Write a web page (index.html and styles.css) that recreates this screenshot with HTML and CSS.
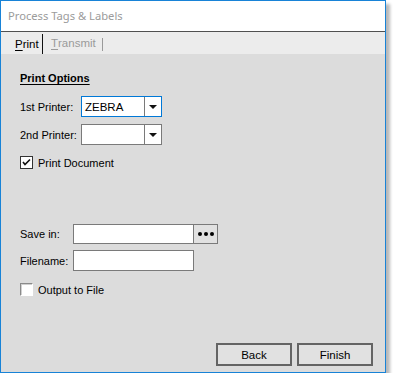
FILE: index.html
```html
<!DOCTYPE html>
<html>
<head>
<meta charset="utf-8">
<link rel="stylesheet" href="styles.css">
</head>
<body>
<div class="window">
  <div class="titlebar">Process Tags &amp; Labels</div>
  <div class="tabs">
    <div class="tab active"><u>P</u>rint</div>
    <div class="tab inactive"><u>T</u>ransmit</div>
  </div>
  <div class="panel">
    <div class="section-title">Print Options</div>
    <div class="row row-combo1">
      <span class="label lw-printer">1st Printer:</span>
      <div class="combo focused">
        <span class="combo-text">ZEBRA</span>
        <span class="combo-btn"><span class="arrow"></span></span>
      </div>
    </div>
    <div class="row row-combo2">
      <span class="label lw-printer">2nd Printer:</span>
      <div class="combo">
        <span class="combo-text"></span>
        <span class="combo-btn"><span class="arrow"></span></span>
      </div>
    </div>
    <div class="row row-check1">
      <span class="checkbox checked">
        <svg width="11" height="11" viewBox="0 0 11 11"><path d="M2 5 L4 7.5 L9 2.5" fill="none" stroke="#111" stroke-width="1.6"/></svg>
      </span>
      <span class="check-label">Print Document</span>
    </div>
    <div class="row row-save">
      <span class="label lw-save">Save in:</span>
      <div class="input input-save">
        <span class="input-text"></span>
        <span class="dots-btn"><span class="dot"></span><span class="dot"></span><span class="dot"></span></span>
      </div>
    </div>
    <div class="row row-file">
      <span class="label lw-save">Filename:</span>
      <div class="input input-file"></div>
    </div>
    <div class="row row-check2">
      <span class="checkbox plain"></span>
      <span class="check-label">Output to File</span>
    </div>
    <div class="buttons">
      <div class="btn">Back</div>
      <div class="btn">Finish</div>
    </div>
  </div>
</div>
</body>
</html>
```
FILE: styles.css
```css
html, body {
  margin: 0;
  padding: 0;
  background: #ffffff;
}
body {
  font-family: "Liberation Sans", Arial, sans-serif;
  font-size: 11px;
  color: #000;
}
.window {
  width: 384px;
  height: 371px;
  border: 1px solid #1883d7;
  display: flex;
  flex-direction: column;
  background: #dcdcdc;
  box-shadow: 4px 4px 3px rgba(0, 0, 0, 0.28);
}
.titlebar {
  height: 31px;
  box-sizing: border-box;
  background: #ffffff;
  border-bottom: 1px solid #505050;
  color: #9b9b9b;
  font-family: "Noto Sans", "Open Sans", sans-serif;
  font-size: 11.2px;
  display: flex;
  align-items: center;
  padding-left: 7px;
  padding-bottom: 1px;
}
.tabs {
  height: 22px;
  background: #ececec;
  display: flex;
  align-items: stretch;
  padding-left: 13px;
  box-sizing: border-box;
}
.tab {
  display: flex;
  align-items: center;
  font-size: 11.5px;
}
.tab.active {
  margin-top: 2px;
  padding-left: 1px;
  width: 29px;
  box-sizing: border-box;
  border-right: 1px solid #111;
  color: #000;
}
.tab.inactive {
  color: #9a9a9a;
  padding-left: 8px;
  padding-right: 7px;
  position: relative;
}
.tab.inactive::after {
  content: "";
  position: absolute;
  right: 0;
  top: 6px;
  height: 13px;
  width: 1px;
  background: #9a9a9a;
}
.tab u {
  text-underline-offset: 2px;
}
.panel {
  flex: 1;
  display: flex;
  flex-direction: column;
  padding: 0 12px 6px 19px;
}
.section-title {
  font-weight: bold;
  text-decoration: underline;
  text-underline-offset: 2px;
  font-size: 11px;
  margin-top: 17px;
  height: 14px;
  line-height: 14px;
}
.row {
  display: flex;
  align-items: center;
}
.label {
  font-size: 11px;
}
.lw-printer { width: 61px; flex: none; }
.lw-save { width: 53px; flex: none; }
.row-combo1 { margin-top: 11px; }
.row-combo2 { margin-top: 7px; }
.row-check1 { margin-top: 11px; }
.row-save { margin-top: 55px; }
.row-file { margin-top: 6px; }
.row-check2 { margin-top: 12px; }
.combo {
  width: 81px;
  height: 21px;
  box-sizing: border-box;
  border: 1px solid #7a7a7a;
  background: #fff;
  display: flex;
}
.combo.focused {
  border-color: #0078d7;
}
.combo-text {
  flex: 1;
  padding-left: 3px;
  font-size: 11.5px;
  display: flex;
  align-items: center;
}
.combo-btn {
  width: 16px;
  border-left: 1px solid #7a7a7a;
  background: #ffffff;
  display: flex;
  align-items: center;
  justify-content: center;
}
.arrow {
  width: 0;
  height: 0;
  border-left: 4px solid transparent;
  border-right: 4px solid transparent;
  border-top: 4px solid #111;
}
.checkbox {
  width: 13px;
  height: 13px;
  box-sizing: border-box;
  background: #fff;
  display: flex;
  align-items: center;
  justify-content: center;
  flex: none;
}
.checkbox.checked {
  border: 1px solid #333;
}
.checkbox.plain {
  border-style: solid;
  border-width: 1px;
  border-color: #8a8a8a #ffffff #ffffff #8a8a8a;
  box-shadow: inset 1px 1px 0 #d0d0d0;
}
.check-label {
  margin-left: 5px;
  font-size: 11px;
}
.input {
  height: 20px;
  box-sizing: border-box;
  border: 1px solid #7a7a7a;
  background: #fff;
  display: flex;
}
.input-save { width: 145px; }
.input-file { width: 121px; height: 21px; }
.input-text { flex: 1; }
.dots-btn {
  width: 23px;
  border-left: 1px solid #7a7a7a;
  background: #e1e1e1;
  display: flex;
  align-items: center;
  justify-content: center;
  gap: 2px;
}
.dot {
  width: 4px;
  height: 4px;
  border-radius: 50%;
  background: #000;
}
.buttons {
  margin-top: auto;
  display: flex;
  justify-content: flex-end;
  gap: 5px;
}
.btn {
  width: 76px;
  height: 23px;
  box-sizing: border-box;
  border: 2px solid #646464;
  background: #e1e1e1;
  display: flex;
  align-items: center;
  justify-content: center;
  font-size: 11.5px;
}
```
